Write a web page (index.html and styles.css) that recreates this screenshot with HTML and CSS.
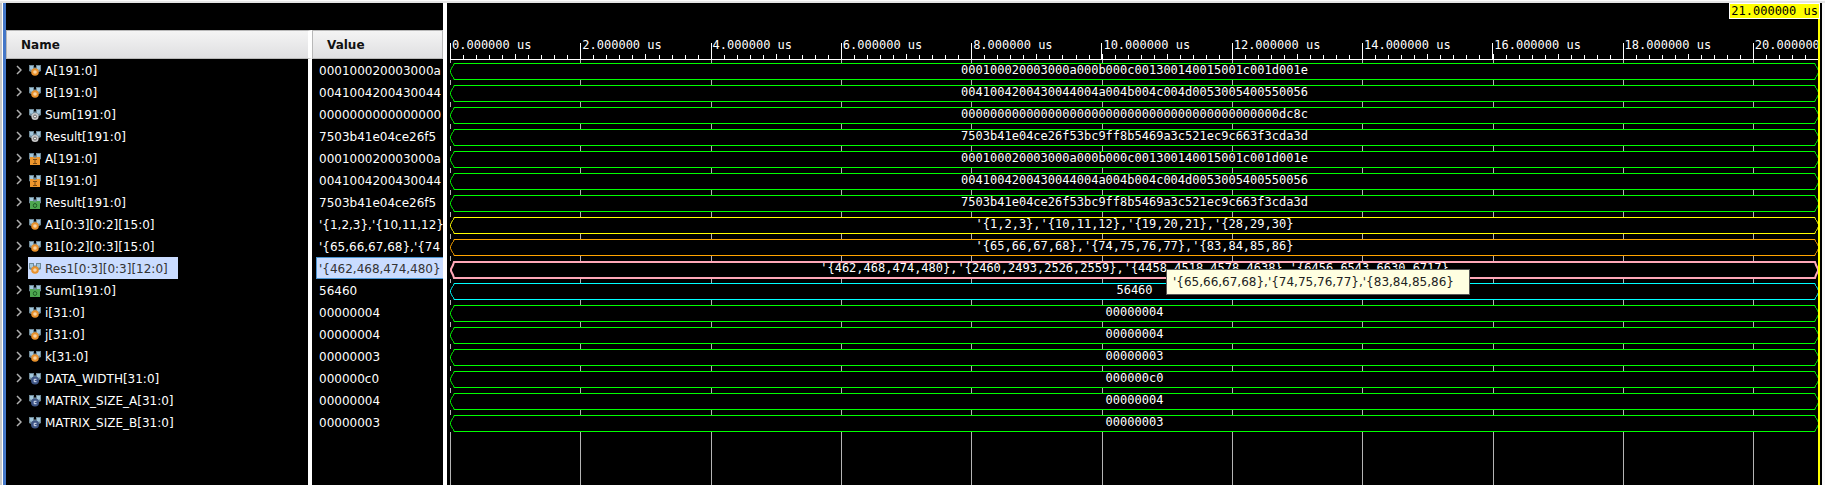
FILE: index.html
```
<!DOCTYPE html>
<html lang="en">
<head>
<meta charset="utf-8">
<title>Waveform</title>
<link rel="stylesheet" href="styles.css">
</head>
<body>
<svg class="defs" aria-hidden="true">
  <symbol id="chevron" viewBox="0 0 6 10"><path d="M1 1L5 5L1 9" fill="none" stroke="#b0b0b0" stroke-width="1.5"/></symbol>
  <symbol id="bus" viewBox="0 0 12 12"><path d="M0 0H5V2L6 3L7 2V0H12V6L10 7H2L0 6Z" fill="#6f8a99"/><path d="M1 1H4V4L2 5L1 4ZM8 1H11V4L10 5L8 4Z" fill="#a3c7dc"/></symbol>
  <symbol id="reg" viewBox="0 0 12 12"><use href="#bus" width="12" height="12"/><circle cx="6" cy="7" r="3.8" fill="#e8912c"/><circle cx="6" cy="7" r="1.8" fill="#f9d3a0"/></symbol>
  <symbol id="net" viewBox="0 0 12 12"><use href="#bus" width="12" height="12"/><circle cx="6" cy="7.5" r="3.6" fill="#c9c9c9"/><circle cx="6" cy="7.5" r="1.5" fill="#eee" stroke="#666"/></symbol>
  <symbol id="in" viewBox="0 0 12 12"><use href="#bus" width="12" height="12"/><path d="M1 4H4L6 5L8 4H11V12H1Z" fill="#ee962c"/><path d="M4 6.5H8M4 10.5H8M6 6.5V10.5" stroke="#7a4a12" fill="none"/></symbol>
  <symbol id="out" viewBox="0 0 12 12"><use href="#bus" width="12" height="12"/><path d="M1 4H4L6 5L8 4H11V12H1Z" fill="#4ea750"/><ellipse cx="6" cy="8.5" rx="1.7" ry="2" stroke="#1f5f25" fill="none"/></symbol>
  <symbol id="const" viewBox="0 0 12 12"><use href="#bus" width="12" height="12"/><circle cx="6" cy="7.5" r="4" fill="#3e5585"/><path d="M7.5 6.3H5.2V8.7H7.5" stroke="#dfe7f5" fill="none"/></symbol>
  <symbol id="cap" viewBox="0 0 5 17"><path d="M5 .5H4L3.500 2.500L2.500 3.500L1.500 5.500L.5 7.500V9.500L1.500 11.500L2.500 13.500L3.500 14.500L4 16.500H5" fill="none" stroke="currentColor"/></symbol>
  <symbol id="cap-bold" viewBox="0 0 5 18"><path d="M5 1H4L3 4L1 8V10L3 14L4 17H5" fill="none" stroke="currentColor" stroke-width="2"/></symbol>
</svg>
<main class="viewer">
  <section class="signals">
    <table class="list">
      <thead><tr><th class="name-col">Name</th><th class="value-col">Value</th></tr></thead>
      <tbody>
        <tr><td><div class="sig"><button aria-label="Expand"><svg><use href="#chevron"/></svg></button><span class="tag"><svg><use href="#reg"/></svg>A[191:0]</span></div></td><td><div class="val">000100020003000a</div></td></tr>
        <tr><td><div class="sig"><button aria-label="Expand"><svg><use href="#chevron"/></svg></button><span class="tag"><svg><use href="#reg"/></svg>B[191:0]</span></div></td><td><div class="val">0041004200430044</div></td></tr>
        <tr><td><div class="sig"><button aria-label="Expand"><svg><use href="#chevron"/></svg></button><span class="tag"><svg><use href="#net"/></svg>Sum[191:0]</span></div></td><td><div class="val">0000000000000000</div></td></tr>
        <tr><td><div class="sig"><button aria-label="Expand"><svg><use href="#chevron"/></svg></button><span class="tag"><svg><use href="#net"/></svg>Result[191:0]</span></div></td><td><div class="val">7503b41e04ce26f5</div></td></tr>
        <tr><td><div class="sig"><button aria-label="Expand"><svg><use href="#chevron"/></svg></button><span class="tag"><svg><use href="#in"/></svg>A[191:0]</span></div></td><td><div class="val">000100020003000a</div></td></tr>
        <tr><td><div class="sig"><button aria-label="Expand"><svg><use href="#chevron"/></svg></button><span class="tag"><svg><use href="#in"/></svg>B[191:0]</span></div></td><td><div class="val">0041004200430044</div></td></tr>
        <tr><td><div class="sig"><button aria-label="Expand"><svg><use href="#chevron"/></svg></button><span class="tag"><svg><use href="#out"/></svg>Result[191:0]</span></div></td><td><div class="val">7503b41e04ce26f5</div></td></tr>
        <tr><td><div class="sig"><button aria-label="Expand"><svg><use href="#chevron"/></svg></button><span class="tag"><svg><use href="#reg"/></svg>A1[0:3][0:2][15:0]</span></div></td><td><div class="val">'{1,2,3},'{10,11,12}</div></td></tr>
        <tr><td><div class="sig"><button aria-label="Expand"><svg><use href="#chevron"/></svg></button><span class="tag"><svg><use href="#reg"/></svg>B1[0:2][0:3][15:0]</span></div></td><td><div class="val">'{65,66,67,68},'{74</div></td></tr>
        <tr class="selected"><td><div class="sig"><button aria-label="Expand"><svg><use href="#chevron"/></svg></button><span class="tag"><svg><use href="#reg"/></svg>Res1[0:3][0:3][12:0]</span></div></td><td><div class="val">'{462,468,474,480}</div></td></tr>
        <tr><td><div class="sig"><button aria-label="Expand"><svg><use href="#chevron"/></svg></button><span class="tag"><svg><use href="#out"/></svg>Sum[191:0]</span></div></td><td><div class="val">56460</div></td></tr>
        <tr><td><div class="sig"><button aria-label="Expand"><svg><use href="#chevron"/></svg></button><span class="tag"><svg><use href="#reg"/></svg>i[31:0]</span></div></td><td><div class="val">00000004</div></td></tr>
        <tr><td><div class="sig"><button aria-label="Expand"><svg><use href="#chevron"/></svg></button><span class="tag"><svg><use href="#reg"/></svg>j[31:0]</span></div></td><td><div class="val">00000004</div></td></tr>
        <tr><td><div class="sig"><button aria-label="Expand"><svg><use href="#chevron"/></svg></button><span class="tag"><svg><use href="#reg"/></svg>k[31:0]</span></div></td><td><div class="val">00000003</div></td></tr>
        <tr><td><div class="sig"><button aria-label="Expand"><svg><use href="#chevron"/></svg></button><span class="tag"><svg><use href="#const"/></svg>DATA_WIDTH[31:0]</span></div></td><td><div class="val">000000c0</div></td></tr>
        <tr><td><div class="sig"><button aria-label="Expand"><svg><use href="#chevron"/></svg></button><span class="tag"><svg><use href="#const"/></svg>MATRIX_SIZE_A[31:0]</span></div></td><td><div class="val">00000004</div></td></tr>
        <tr><td><div class="sig"><button aria-label="Expand"><svg><use href="#chevron"/></svg></button><span class="tag"><svg><use href="#const"/></svg>MATRIX_SIZE_B[31:0]</span></div></td><td><div class="val">00000003</div></td></tr>
      </tbody>
    </table>
    <div class="rest"></div>
  </section>
  <section class="waves">
    <div class="grid" aria-hidden="true"><i></i><i></i><i></i><i></i><i></i><i></i><i></i><i></i><i></i><i></i><i class="half"></i></div>
    <div class="ruler">
      <div class="step">0.000000 us</div><div class="step">2.000000 us</div><div class="step">4.000000 us</div><div class="step">6.000000 us</div><div class="step">8.000000 us</div><div class="step">10.000000 us</div><div class="step">12.000000 us</div><div class="step">14.000000 us</div><div class="step">16.000000 us</div><div class="step">18.000000 us</div><div class="step half">20.000000</div>
      <div class="ticks" aria-hidden="true">
        <i></i><i></i><i></i><i></i><i></i><i></i><i></i><i></i><i></i><i></i><i></i><i></i><i></i><i></i><i></i><i></i><i></i><i></i><i></i><i></i><i></i>
        <i></i><i></i><i></i><i></i><i></i><i></i><i></i><i></i><i></i><i></i><i></i><i></i><i></i><i></i><i></i><i></i><i></i><i></i><i></i><i></i><i></i>
        <i></i><i></i><i></i><i></i><i></i><i></i><i></i><i></i><i></i><i></i><i></i><i></i><i></i><i></i><i></i><i></i><i></i><i></i><i></i><i></i><i></i>
        <i></i><i></i><i></i><i></i><i></i><i></i><i></i><i></i><i></i><i></i><i></i><i></i><i></i><i></i><i></i><i></i><i></i><i></i><i></i><i></i><i></i>
        <i></i><i></i><i></i><i></i><i></i><i></i><i></i><i></i><i></i><i></i><i></i><i></i><i></i><i></i><i></i><i></i><i></i><i></i><i></i><i></i><i></i>
      </div>
    </div>
    <div class="traces">
      <div class="wave"><svg><use href="#cap"/></svg><span>000100020003000a000b000c001300140015001c001d001e</span><svg class="end"><use href="#cap"/></svg></div>
      <div class="wave"><svg><use href="#cap"/></svg><span>0041004200430044004a004b004c004d0053005400550056</span><svg class="end"><use href="#cap"/></svg></div>
      <div class="wave"><svg><use href="#cap"/></svg><span>00000000000000000000000000000000000000000000dc8c</span><svg class="end"><use href="#cap"/></svg></div>
      <div class="wave"><svg><use href="#cap"/></svg><span>7503b41e04ce26f53bc9ff8b5469a3c521ec9c663f3cda3d</span><svg class="end"><use href="#cap"/></svg></div>
      <div class="wave"><svg><use href="#cap"/></svg><span>000100020003000a000b000c001300140015001c001d001e</span><svg class="end"><use href="#cap"/></svg></div>
      <div class="wave"><svg><use href="#cap"/></svg><span>0041004200430044004a004b004c004d0053005400550056</span><svg class="end"><use href="#cap"/></svg></div>
      <div class="wave"><svg><use href="#cap"/></svg><span>7503b41e04ce26f53bc9ff8b5469a3c521ec9c663f3cda3d</span><svg class="end"><use href="#cap"/></svg></div>
      <div class="wave yellow"><svg><use href="#cap"/></svg><span>'{1,2,3},'{10,11,12},'{19,20,21},'{28,29,30}</span><svg class="end"><use href="#cap"/></svg></div>
      <div class="wave orange"><svg><use href="#cap"/></svg><span>'{65,66,67,68},'{74,75,76,77},'{83,84,85,86}</span><svg class="end"><use href="#cap"/></svg></div>
      <div class="wave pink"><svg><use href="#cap-bold"/></svg><span>'{462,468,474,480},'{2460,2493,2526,2559},'{4458,4518,4578,4638},'{6456,6543,6630,6717}</span><svg class="end"><use href="#cap-bold"/></svg></div>
      <div class="wave cyan"><svg><use href="#cap"/></svg><span>56460</span><svg class="end"><use href="#cap"/></svg></div>
      <div class="wave"><svg><use href="#cap"/></svg><span>00000004</span><svg class="end"><use href="#cap"/></svg></div>
      <div class="wave"><svg><use href="#cap"/></svg><span>00000004</span><svg class="end"><use href="#cap"/></svg></div>
      <div class="wave"><svg><use href="#cap"/></svg><span>00000003</span><svg class="end"><use href="#cap"/></svg></div>
      <div class="wave"><svg><use href="#cap"/></svg><span>000000c0</span><svg class="end"><use href="#cap"/></svg></div>
      <div class="wave"><svg><use href="#cap"/></svg><span>00000004</span><svg class="end"><use href="#cap"/></svg></div>
      <div class="wave"><svg><use href="#cap"/></svg><span>00000003</span><svg class="end"><use href="#cap"/></svg></div>
    </div>
    <div class="cursor"></div>
    <div class="marker">21.000000 us</div>
    <div class="tooltip" role="tooltip">'{65,66,67,68},'{74,75,76,77},'{83,84,85,86}</div>
  </section>
</main>
</body>
</html>
```
FILE: styles.css
```
* { box-sizing: border-box; }
body { margin: 0; background: #fafafa; font: 12px/22px "DejaVu Sans", sans-serif; color: #fff; }
.defs { position: absolute; width: 0; height: 0; }
.viewer {
  display: flex; height: 100vh; overflow: hidden;
  padding: 3px 3px 0 6px;
  background: linear-gradient(#fafafa 1px, #e4e4e4 1px) top / 100% 3px no-repeat,
    linear-gradient(90deg, #c8c8c8 2px, #fff 2px 3px, #4477c8 3px 6px, transparent 6px);
}
.signals { display: flex; flex-direction: column; flex: none; width: 441px; padding-top: 27px; background: #000; border-right: 4px solid #fff; }
.list { width: 100%; table-layout: fixed; border-collapse: separate; border-spacing: 0; }
.list th, .list td { padding: 0; }
.list th {
  height: 29px; padding: 1px 14px 0; text-align: left; color: #111;
  border: 1px solid #b8b8b8;
  background: linear-gradient(#f4f4f4, #dfdfe1);
}
.list .name-col { width: 306px; background-clip: padding-box; border-right: 4px solid #fff; }
.list td { height: 22px; }
.list td:first-child { border-right: 4px solid #fff; }
.rest { flex: 1; width: 306px; border-right: 4px solid #fff; }
.sig { display: flex; align-items: center; height: 22px; padding-left: 10px; gap: 6px; }
.sig button { display: flex; width: 6px; height: 10px; padding: 0; border: 0; background: none; }
.sig button svg { width: 6px; height: 10px; }
.tag { display: flex; align-items: center; gap: 4px; height: 22px; padding: 0 5px 0 1px; white-space: nowrap; line-height: 20px; padding-top: 2px; }
.tag svg { width: 12px; height: 12px; }
.val { height: 22px; margin-left: 4px; padding: 2px 0 0 3px; overflow: hidden; white-space: nowrap; line-height: 20px; }
.selected .tag, .selected .val { background: #cadcff; color: #333; }
.selected .tag { padding-right: 10px; }
.selected .val { border: 1px solid #4a94d0; border-right: 0; padding: 1px 0 0 2px; }

.waves { position: relative; flex: 1; min-width: 0; padding: 0 3px; background: #000; font: 12px/14px "DejaVu Sans Mono", monospace; }
.grid { position: absolute; inset: 57px 3px 0 3px; display: flex; }
.grid i { flex: 2; border-left: 1px solid #b4b4b4; }
.grid .half, .ruler .half { flex: 1; }
.ruler { position: relative; display: flex; height: 57px; padding-top: 37px; border-bottom: 1px solid #fff; }
.step { flex: 2; min-width: 0; height: 19px; padding-left: 2px; white-space: nowrap; line-height: 11px; background: linear-gradient(#fff, #fff) 0 100% / 1px 16px no-repeat; }
.ticks { position: absolute; left: 0; bottom: 0; width: 100%; height: 5px; display: flex; align-items: flex-end; }
.ticks i { flex: 1; height: 4px; border-left: 1px solid #fff; }
.ticks i:nth-child(5n+1) { height: 5px; }
.traces { position: relative; display: flex; flex-direction: column; gap: 5px; padding-top: 3px; }
.wave { display: flex; height: 17px; color: #0f0; }
.wave svg { flex: none; width: 5px; height: 17px; background: #000; }
.wave .end { transform: scaleX(-1); }
.wave span { flex: 1; border: 1px solid currentColor; border-width: 1px 0; background: #000; text-align: center; line-height: 12px; white-space: nowrap; -webkit-text-fill-color: #fff; }
.yellow { color: #ff0; }
.orange { color: #ffa500; }
.pink { color: #ffa8b8; height: 18px; margin-bottom: -1px; }
.pink svg { height: 18px; }
.pink span { border-width: 2px 0; line-height: 10px; }
.cyan { color: #0ff; }
.cursor { position: absolute; top: 16px; bottom: 0; right: 2px; width: 2px; background: #ff0; }
.marker { position: absolute; top: 0; right: 2px; padding: 0 1px; border: 1px solid #fff; background: #ff0; color: #000; }
.tooltip { position: absolute; left: 719px; top: 266px; padding: 0 15px 0 6px; border: 1px solid #555; background: #ffffe1; color: #222; font: 12px/24px "DejaVu Sans", sans-serif; white-space: nowrap; }
```
